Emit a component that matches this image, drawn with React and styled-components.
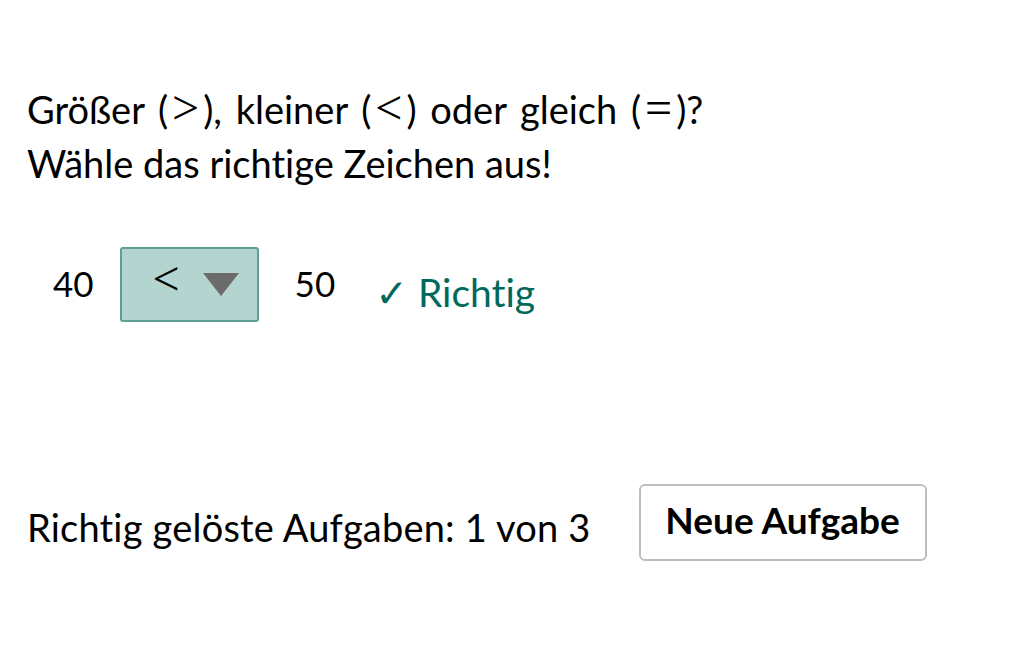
import styled, { createGlobalStyle } from "styled-components";

const GlobalStyle = createGlobalStyle`
  body {
    margin: 0;
    background: #ffffff;
    font-family: Lato, "DejaVu Sans", sans-serif;
    font-variant-ligatures: none;
    color: #000000;
  }
`;

const Page = styled.div`
  padding: 82px 0 0 27px;
  width: 1032px;
  height: 645px;
  box-sizing: border-box;
`;

const PromptLine = styled.div`
  font-size: 38px;
  line-height: 54px;
  word-spacing: ${(p) => p.$spacing || 0}px;
`;

const MathSym = styled.span`
  font-family: "Liberation Serif", serif;
  font-size: 48px;
  line-height: 0;
  word-spacing: 0;
  padding: 0 4px;
`;

const TaskRow = styled.div`
  display: flex;
  align-items: center;
  margin-top: 57px;
  margin-left: 26px;
  height: 75px;
`;

const Number = styled.span`
  font-size: 35px;
  line-height: 40px;
  margin-top: -4px;
`;

const SignSelect = styled.div`
  display: flex;
  align-items: center;
  box-sizing: border-box;
  width: 139px;
  height: 75px;
  margin: 0 36px 0 26px;
  background: #b3d4cf;
  border: 2px solid #5f9e92;
  border-radius: 3px;
  padding-left: 31px;
  gap: 23px;
`;

const Sign = styled.span`
  font-family: "Liberation Serif", serif;
  font-size: 48px;
  line-height: 40px;
  margin-top: -12px;
`;

const Feedback = styled.span`
  margin-left: 40px;
  font-size: 39px;
  line-height: 40px;
  color: #00695c;
  margin-top: 14px;
`;

const Footer = styled.div`
  display: flex;
  align-items: center;
  margin-top: 162px;
`;

const Score = styled.span`
  font-size: 38px;
  letter-spacing: 0.2px;
  line-height: 44px;
  margin-top: 8px;
`;

const NewTaskButton = styled.button`
  margin-left: 48px;
  width: 288px;
  height: 77px;
  background: #ffffff;
  border: 2px solid #bdbdbd;
  border-radius: 6px;
  font-family: Lato, "DejaVu Sans", sans-serif;
  font-variant-ligatures: none;
  font-weight: 700;
  font-size: 37px;
  color: #000000;
  padding: 0 0 6px;
`;

const Triangle = () => (
  <svg width="36" height="23" viewBox="0 0 36 23">
    <polygon points="0,0 36,0 18,23" fill="#6b6b6b" />
  </svg>
);

export default function App() {
  return (
    <Page>
      <GlobalStyle />
      <PromptLine $spacing={4}>
        Größer (<MathSym>&gt;</MathSym>), kleiner (<MathSym>&lt;</MathSym>) oder
        gleich (<MathSym>=</MathSym>)?
      </PromptLine>
      <PromptLine>Wähle das richtige Zeichen aus!</PromptLine>
      <TaskRow>
        <Number>40</Number>
        <SignSelect>
          <Sign>&lt;</Sign>
          <Triangle />
        </SignSelect>
        <Number>50</Number>
        <Feedback>✓ Richtig</Feedback>
      </TaskRow>
      <Footer>
        <Score>Richtig gelöste Aufgaben: 1 von 3</Score>
        <NewTaskButton>Neue Aufgabe</NewTaskButton>
      </Footer>
    </Page>
  );
}
